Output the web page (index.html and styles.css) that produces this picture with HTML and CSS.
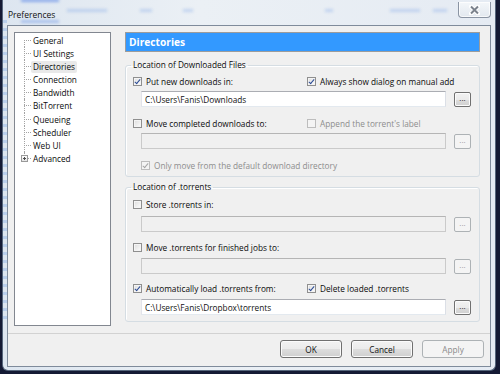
FILE: index.html
```html
<!DOCTYPE html>
<html lang="en">
<head>
    <meta charset="UTF-8">
    <meta name="viewport" content="width=device-width, initial-scale=1.0">
    <title>Preferences</title>
    <link rel="stylesheet" href="styles.css">
</head>
<body>
    <div class="window">
        <div class="titlebar">
            <!-- blurred content of the window behind the glass -->
            <i class="blur b1"></i>
            <i class="blur b2"></i>
            <i class="blur b3"></i>
            <i class="blur b4"></i>
            <i class="blur b5"></i>
            <i class="blur b6"></i>
            <i class="blur b7"></i>
            <i class="blur b8"></i>
            <span class="title">Preferences</span>
            <button class="close-btn" title="Close">
                <svg width="11" height="10" viewBox="0 0 11 10">
                    <path d="M2 1.5 L9 8.5 M9 1.5 L2 8.5" stroke="#ffffff" stroke-width="4" stroke-linecap="round"/>
                    <path d="M2 1.5 L9 8.5 M9 1.5 L2 8.5" stroke="#7b828c" stroke-width="2"/>
                </svg>
            </button>
        </div>

        <div class="client">
            <div class="main">
                <ul class="tree">
                    <li><span>General</span></li>
                    <li><span>UI Settings</span></li>
                    <li class="sel"><span>Directories</span></li>
                    <li><span>Connection</span></li>
                    <li><span>Bandwidth</span></li>
                    <li><span>BitTorrent</span></li>
                    <li><span>Queueing</span></li>
                    <li><span>Scheduler</span></li>
                    <li><span>Web UI</span></li>
                    <li class="collapsed"><i class="expander"></i><span>Advanced</span></li>
                </ul>

                <div class="page">
                    <div class="page-header">Directories</div>

                    <fieldset class="group first">
                        <legend>Location of Downloaded Files</legend>
                        <div class="check-row">
                            <label class="opt col1"><span class="cb on"></span>Put new downloads in:</label>
                            <label class="opt"><span class="cb on"></span>Always show dialog on manual add</label>
                        </div>
                        <div class="path-row">
                            <input type="text" value="C:\Users\Fanis\Downloads">
                            <button class="browse">...</button>
                        </div>
                        <div class="check-row gap">
                            <label class="opt col1"><span class="cb"></span>Move completed downloads to:</label>
                            <label class="opt off"><span class="cb"></span>Append the torrent's label</label>
                        </div>
                        <div class="path-row">
                            <input type="text" value="" disabled>
                            <button class="browse" disabled>...</button>
                        </div>
                        <div class="check-row gap indent">
                            <label class="opt off"><span class="cb on"></span>Only move from the default download directory</label>
                        </div>
                    </fieldset>

                    <fieldset class="group second">
                        <legend>Location of .torrents</legend>
                        <div class="check-row">
                            <label class="opt col1"><span class="cb"></span>Store .torrents in:</label>
                        </div>
                        <div class="path-row">
                            <input type="text" value="" disabled>
                            <button class="browse" disabled>...</button>
                        </div>
                        <div class="check-row gap">
                            <label class="opt col1"><span class="cb"></span>Move .torrents for finished jobs to:</label>
                        </div>
                        <div class="path-row">
                            <input type="text" value="" disabled>
                            <button class="browse" disabled>...</button>
                        </div>
                        <div class="check-row gap">
                            <label class="opt col1"><span class="cb on"></span>Automatically load .torrents from:</label>
                            <label class="opt"><span class="cb on"></span>Delete loaded .torrents</label>
                        </div>
                        <div class="path-row">
                            <input type="text" value="C:\Users\Fanis\Dropbox\torrents">
                            <button class="browse">...</button>
                        </div>
                    </fieldset>
                </div>
            </div>

            <div class="buttons">
                <button class="btn">OK</button>
                <button class="btn">Cancel</button>
                <button class="btn" disabled>Apply</button>
            </div>
        </div>
    </div>
</body>
</html>
```

FILE: styles.css
```css
* {
    box-sizing: border-box;
}
body {
    margin: 0;
    width: 500px;
    height: 374px;
    overflow: hidden;
    background: #141a34;
    font-family: "Open Sans", "Noto Sans", sans-serif;
    font-size: 8.25px;
    color: #0a0a0a;
}

/* window frame (aero glass, inactive) */
.window {
    width: 494px;
    height: 371px;
    margin-left: 2px;
    display: flex;
    flex-direction: column;
    padding: 0 4px 3px 4px;
    background:
        repeating-linear-gradient(180deg, rgba(120, 165, 230, 0.35) 0 3px, transparent 3px 8px) 0 20px / 4px 300px no-repeat,
        linear-gradient(90deg, #dde6f0, #ebf0f5 40%, #e5ebf3);
    border: 1px solid #56667c;
    border-top: none;
    border-radius: 0 0 6px 6px;
}
.titlebar {
    position: relative;
    height: 25px;
    display: flex;
    align-items: flex-start;
    justify-content: space-between;
    flex: none;
}
.blur {
    position: absolute;
    height: 3px;
    background: rgba(90, 140, 225, 0.28);
    filter: blur(1.5px);
}
.b1 { left: 14px; top: -1px; width: 38px; background: rgba(70, 120, 230, 0.55); }
.b2 { left: 14px; top: 20px; width: 38px; background: rgba(70, 120, 230, 0.35); }
.b3 { left: 60px; top: 9px; width: 40px; }
.b4 { left: 133px; top: 9px; width: 12px; }
.b5 { left: 176px; top: 9px; width: 10px; }
.b6 { left: 318px; top: 9px; width: 8px; }
.b7 { left: 383px; top: 9px; width: 30px; }
.b8 { left: 426px; top: 9px; width: 14px; }
.title {
    position: relative;
    padding: 9px 0 0 1px;
    line-height: 12px;
    font-size: 8.5px;
    color: #111;
}
.close-btn {
    position: relative;
    width: 33px;
    height: 16px;
    margin-top: 2px;
    padding: 0;
    display: flex;
    align-items: center;
    justify-content: center;
    border: 1px solid #8a94a3;
    border-top: none;
    border-radius: 0 0 4px 4px;
    background: linear-gradient(#f4f7fa, #e2e8ef);
    box-shadow: inset 0 0 0 1px rgba(255, 255, 255, 0.7);
}

.client {
    flex: 1;
    display: flex;
    flex-direction: column;
    background: #f0f0f0;
    border: 1px solid #7f8b9b;
}
.main {
    height: 307px;
    flex: none;
    display: flex;
    align-items: flex-start;
    padding: 6px 10px 0 6px;
}

/* tree */
.tree {
    width: 97px;
    height: 294px;
    flex: none;
    list-style: none;
    margin: 0;
    padding: 1px 0 0 0;
    background: #fff;
    border: 1px solid #828790;
}
.tree li {
    position: relative;
    height: 13.1px;
    line-height: 13px;
    padding-left: 18px;
    white-space: nowrap;
}
.tree li::before {
    content: "";
    position: absolute;
    left: 9px;
    top: 6px;
    width: 7px;
    border-top: 1px dotted #a3a3a3;
}
.tree li::after {
    content: "";
    position: absolute;
    left: 9px;
    top: 0;
    bottom: 0;
    border-left: 1px dotted #a3a3a3;
}
.tree li:first-child::after {
    top: 6px;
}
.tree li:last-child::after {
    bottom: 9px;
}
.tree li.sel span {
    display: inline-block;
    line-height: 12px;
    padding: 0 2px;
    margin-left: -2px;
    background: #e9e9e9;
    border-radius: 2px;
}
.expander {
    position: absolute;
    left: 6px;
    top: 3px;
    width: 7px;
    height: 7px;
    z-index: 1;
    background:
        linear-gradient(#4d4d4d, #4d4d4d) center / 3px 1px no-repeat,
        linear-gradient(#4d4d4d, #4d4d4d) center / 1px 3px no-repeat,
        linear-gradient(#ffffff, #e4e4e4);
    border: 1px solid #999;
}

/* page */
.page {
    width: 355px;
    margin-left: 14px;
    flex: none;
}
.page-header {
    height: 20px;
    line-height: 18px;
    padding-left: 3px;
    background: #3399ff;
    border: 1px solid #9c9c9c;
    color: #fff;
    font-weight: bold;
    font-size: 10.2px;
}
.group {
    margin: 0;
    padding: 0 8px 5px 7px;
    border: 1px solid #d5dde3;
    border-radius: 3px;
    box-shadow: inset 1px 1px 0 #fff;
}
.group.first {
    margin-top: 7px;
}
.group.second {
    margin-top: 4px;
    padding-bottom: 6px;
}
.group legend {
    padding: 0 2px;
    margin-left: -2px;
    line-height: 12px;
}
.check-row {
    height: 12px;
    margin-top: 4px;
    display: flex;
    align-items: center;
}
.first .check-row.gap {
    margin-top: 10px;
}
.second .check-row {
    margin-top: 5px;
}
.second .check-row.gap {
    margin-top: 9px;
}
.second .check-row.gap:nth-last-child(2) {
    margin-top: 8px;
}
.check-row.indent {
    padding-left: 8px;
}
.opt {
    display: flex;
    align-items: center;
    white-space: nowrap;
}
.opt.col1 {
    width: 174px;
}
.opt.off {
    color: #8d8d8d;
}
.cb {
    width: 9px;
    height: 9px;
    margin-right: 4px;
    position: relative;
    flex: none;
    border: 1px solid #8f8f8f;
    background: linear-gradient(135deg, #dcdcdc, #fdfdfd);
    box-shadow: inset 0 0 0 1px #f4f4f4;
}
.cb.on::after {
    content: "";
    position: absolute;
    left: 2px;
    top: 0;
    width: 2px;
    height: 5px;
    border: solid #2a4a94;
    border-width: 0 1.5px 1.5px 0;
    transform: rotate(40deg);
}
.off .cb {
    border-color: #bdbdbd;
    background: #f4f4f4;
}
.off .cb.on::after {
    border-color: #a5a5a5;
}
.path-row {
    height: 16px;
    margin-top: 4px;
    padding-left: 8px;
    display: flex;
    align-items: center;
    gap: 8px;
}
.second .path-row {
    margin-top: 5px;
}
.second .path-row:nth-child(3) {
    margin-top: 6px;
}
.path-row input {
    flex: 1;
    min-width: 0;
    height: 16px;
    padding: 0 3px;
    margin: 0;
    font: inherit;
    color: #111;
    background: #fff;
    border: 1px solid #abadb3;
    border-color: #abadb3 #dbdfe6 #e3e9ef #e2e3ea;
    outline: none;
}
.path-row input:disabled {
    background: #f0f0f0;
    border-color: #b5b5b5 #cacaca #cacaca #cacaca;
}
.browse {
    width: 17px;
    height: 15px;
    flex: none;
    padding: 0 0 3px;
    font: inherit;
    font-size: 8px;
    line-height: 8px;
    color: #222;
    border: 1px solid #707070;
    border-radius: 2px;
    background: linear-gradient(#f2f2f2 0%, #ebebeb 50%, #dddddd 51%, #cfcfcf 100%);
    box-shadow: inset 0 0 0 1px #fbfbfb;
}
.browse:disabled {
    color: #9a9a9a;
    border-color: #adb2b5;
    background: #f4f4f4;
    box-shadow: none;
}

/* bottom buttons */
.buttons {
    flex: 1;
    display: flex;
    justify-content: flex-end;
    align-items: flex-start;
    gap: 9px;
    padding: 6px 6px 0 0;
    border-top: 1px solid #d2d2d2;
}
.btn {
    width: 62px;
    height: 18px;
    padding: 0;
    font: inherit;
    color: #111;
    border: 1px solid #707070;
    border-radius: 3px;
    background: linear-gradient(#f2f2f2 0%, #ebebeb 50%, #dddddd 51%, #cfcfcf 100%);
    box-shadow: inset 0 0 0 1px #fbfbfb;
}
.btn:disabled {
    color: #8a8a8a;
    border-color: #adb2b5;
    background: #f4f4f4;
    box-shadow: none;
}
```
